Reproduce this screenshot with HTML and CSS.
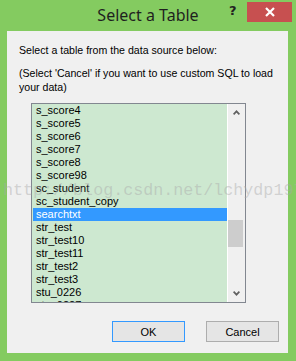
FILE: index.html
```html
<!DOCTYPE html>
<html lang="en">
<head>
    <meta charset="UTF-8">
    <title>Select a Table</title>
    <link rel="stylesheet" href="styles.css">
</head>
<body>
    <div class="window">
        <!-- Title bar -->
        <div class="titlebar">
            <span class="title">Select a Table</span>
            <span class="help">?</span>
            <span class="close">
                <svg width="10" height="10" viewBox="0 0 10 10"><path d="M1 1 L9 9 M9 1 L1 9" stroke="#fff" stroke-width="2.2"/></svg>
            </span>
        </div>

        <!-- Dialog body -->
        <div class="panel">
            <p class="intro">Select a table from the data source below:</p>
            <p class="note">(Select 'Cancel' if you want to use custom SQL to load your data)</p>

            <div class="listbox">
                <ul class="items">
                    <li>s_score4</li>
                    <li>s_score5</li>
                    <li>s_score6</li>
                    <li>s_score7</li>
                    <li>s_score8</li>
                    <li>s_score98</li>
                    <li>sc_student</li>
                    <li>sc_student_copy</li>
                    <li class="selected">searchtxt</li>
                    <li>str_test</li>
                    <li>str_test10</li>
                    <li>str_test11</li>
                    <li>str_test2</li>
                    <li>str_test3</li>
                    <li>stu_0226</li>
                    <li>stu_0227</li>
                </ul>
                <div class="scrollbar">
                    <div class="arrow">
                        <svg width="7" height="5" viewBox="0 0 7 5"><path d="M0.6 4.4 L3.5 1.3 L6.4 4.4" fill="none" stroke="#606060" stroke-width="1.7"/></svg>
                    </div>
                    <div class="track"><div class="thumb"></div></div>
                    <div class="arrow">
                        <svg width="7" height="5" viewBox="0 0 7 5"><path d="M0.6 0.6 L3.5 3.7 L6.4 0.6" fill="none" stroke="#606060" stroke-width="1.7"/></svg>
                    </div>
                </div>
            </div>

            <div class="buttons">
                <button class="btn default">OK</button>
                <button class="btn">Cancel</button>
            </div>
        </div>

        <!-- blog watermark stamped over the picture -->
        <div class="watermark">http://blog.csdn.net/lchydp197</div>
    </div>
</body>
</html>
```

FILE: styles.css
```css
/* Page */
body {
    margin: 0;
    background: #84cb60;
}

.window {
    position: relative;
    width: 296px;
    height: 361px;
    background: #84cb60;
    overflow: hidden;
    font-family: "Liberation Sans", Arial, sans-serif;
    font-size: 11px;
    color: #000000;
}

/* Title bar */
.titlebar {
    height: 31px;
    position: relative;
}

.title {
    position: absolute;
    left: 0;
    right: 0;
    top: 5px;
    text-align: center;
    font-family: "Noto Sans", "Open Sans", sans-serif;
    font-size: 16px;
    line-height: 21px;
    color: #1f1f1f;
}

.help {
    position: absolute;
    left: 229px;
    top: 3px;
    font-family: "DejaVu Sans", sans-serif;
    font-weight: bold;
    font-size: 13px;
    color: #222222;
}

.close {
    position: absolute;
    left: 247px;
    top: 2px;
    width: 45px;
    height: 20px;
    background: #c75050;
    display: flex;
    align-items: center;
    justify-content: center;
}

.close svg {
    display: block;
}

/* Dialog body */
.panel {
    margin: 0 8px 0 7px;
    height: 322px;
    background: #f0f0f0;
    padding: 13px 0 0 12px;
    box-sizing: border-box;
}

.intro {
    margin: 0;
    font-size: 10.6px;
    line-height: 13px;
}

.note {
    margin: 9px 0 0 0;
    font-size: 10.6px;
    line-height: 14px;
    width: 266px;
}

/* List box */
.listbox {
    margin: 9px 0 0 12px;
    width: 215px;
    height: 200px;
    border: 1px solid #828790;
    box-sizing: border-box;
    display: flex;
    background: #cde8d0;
}

.items {
    list-style: none;
    margin: 0;
    padding: 0 0 0 1px;
    flex: 1;
    overflow: hidden;
}

.items li {
    height: 13px;
    line-height: 13px;
    padding-left: 3px;
    white-space: nowrap;
}

.items li.selected {
    background: #3399ff;
    color: #ffffff;
}

.scrollbar {
    width: 17px;
    background: #f0f0f0;
    display: flex;
    flex-direction: column;
    border-left: 1px solid #ffffff;
}

.arrow {
    height: 17px;
    display: flex;
    align-items: center;
    justify-content: center;
}

.track {
    flex: 1;
    padding-top: 99px;
}

.thumb {
    width: 15px;
    height: 27px;
    background: #cdcdcd;
}

/* Buttons */
.buttons {
    display: flex;
    gap: 21px;
    margin: 18px 0 0 93px;
}

.btn {
    width: 73px;
    height: 21px;
    padding: 0;
    font-family: "Liberation Sans", Arial, sans-serif;
    font-size: 11px;
    color: #000000;
    background: #e5e5e5;
    border: 1px solid #adadad;
    border-radius: 0;
}

.btn.default {
    border-color: #3399ff;
}

/* Watermark over the dialog */
.watermark {
    position: absolute;
    left: 3px;
    top: 181px;
    font-family: "Liberation Mono", monospace;
    font-size: 16.7px;
    line-height: 20px;
    white-space: nowrap;
    color: rgba(170, 170, 170, 0.45);
    pointer-events: none;
}
```
